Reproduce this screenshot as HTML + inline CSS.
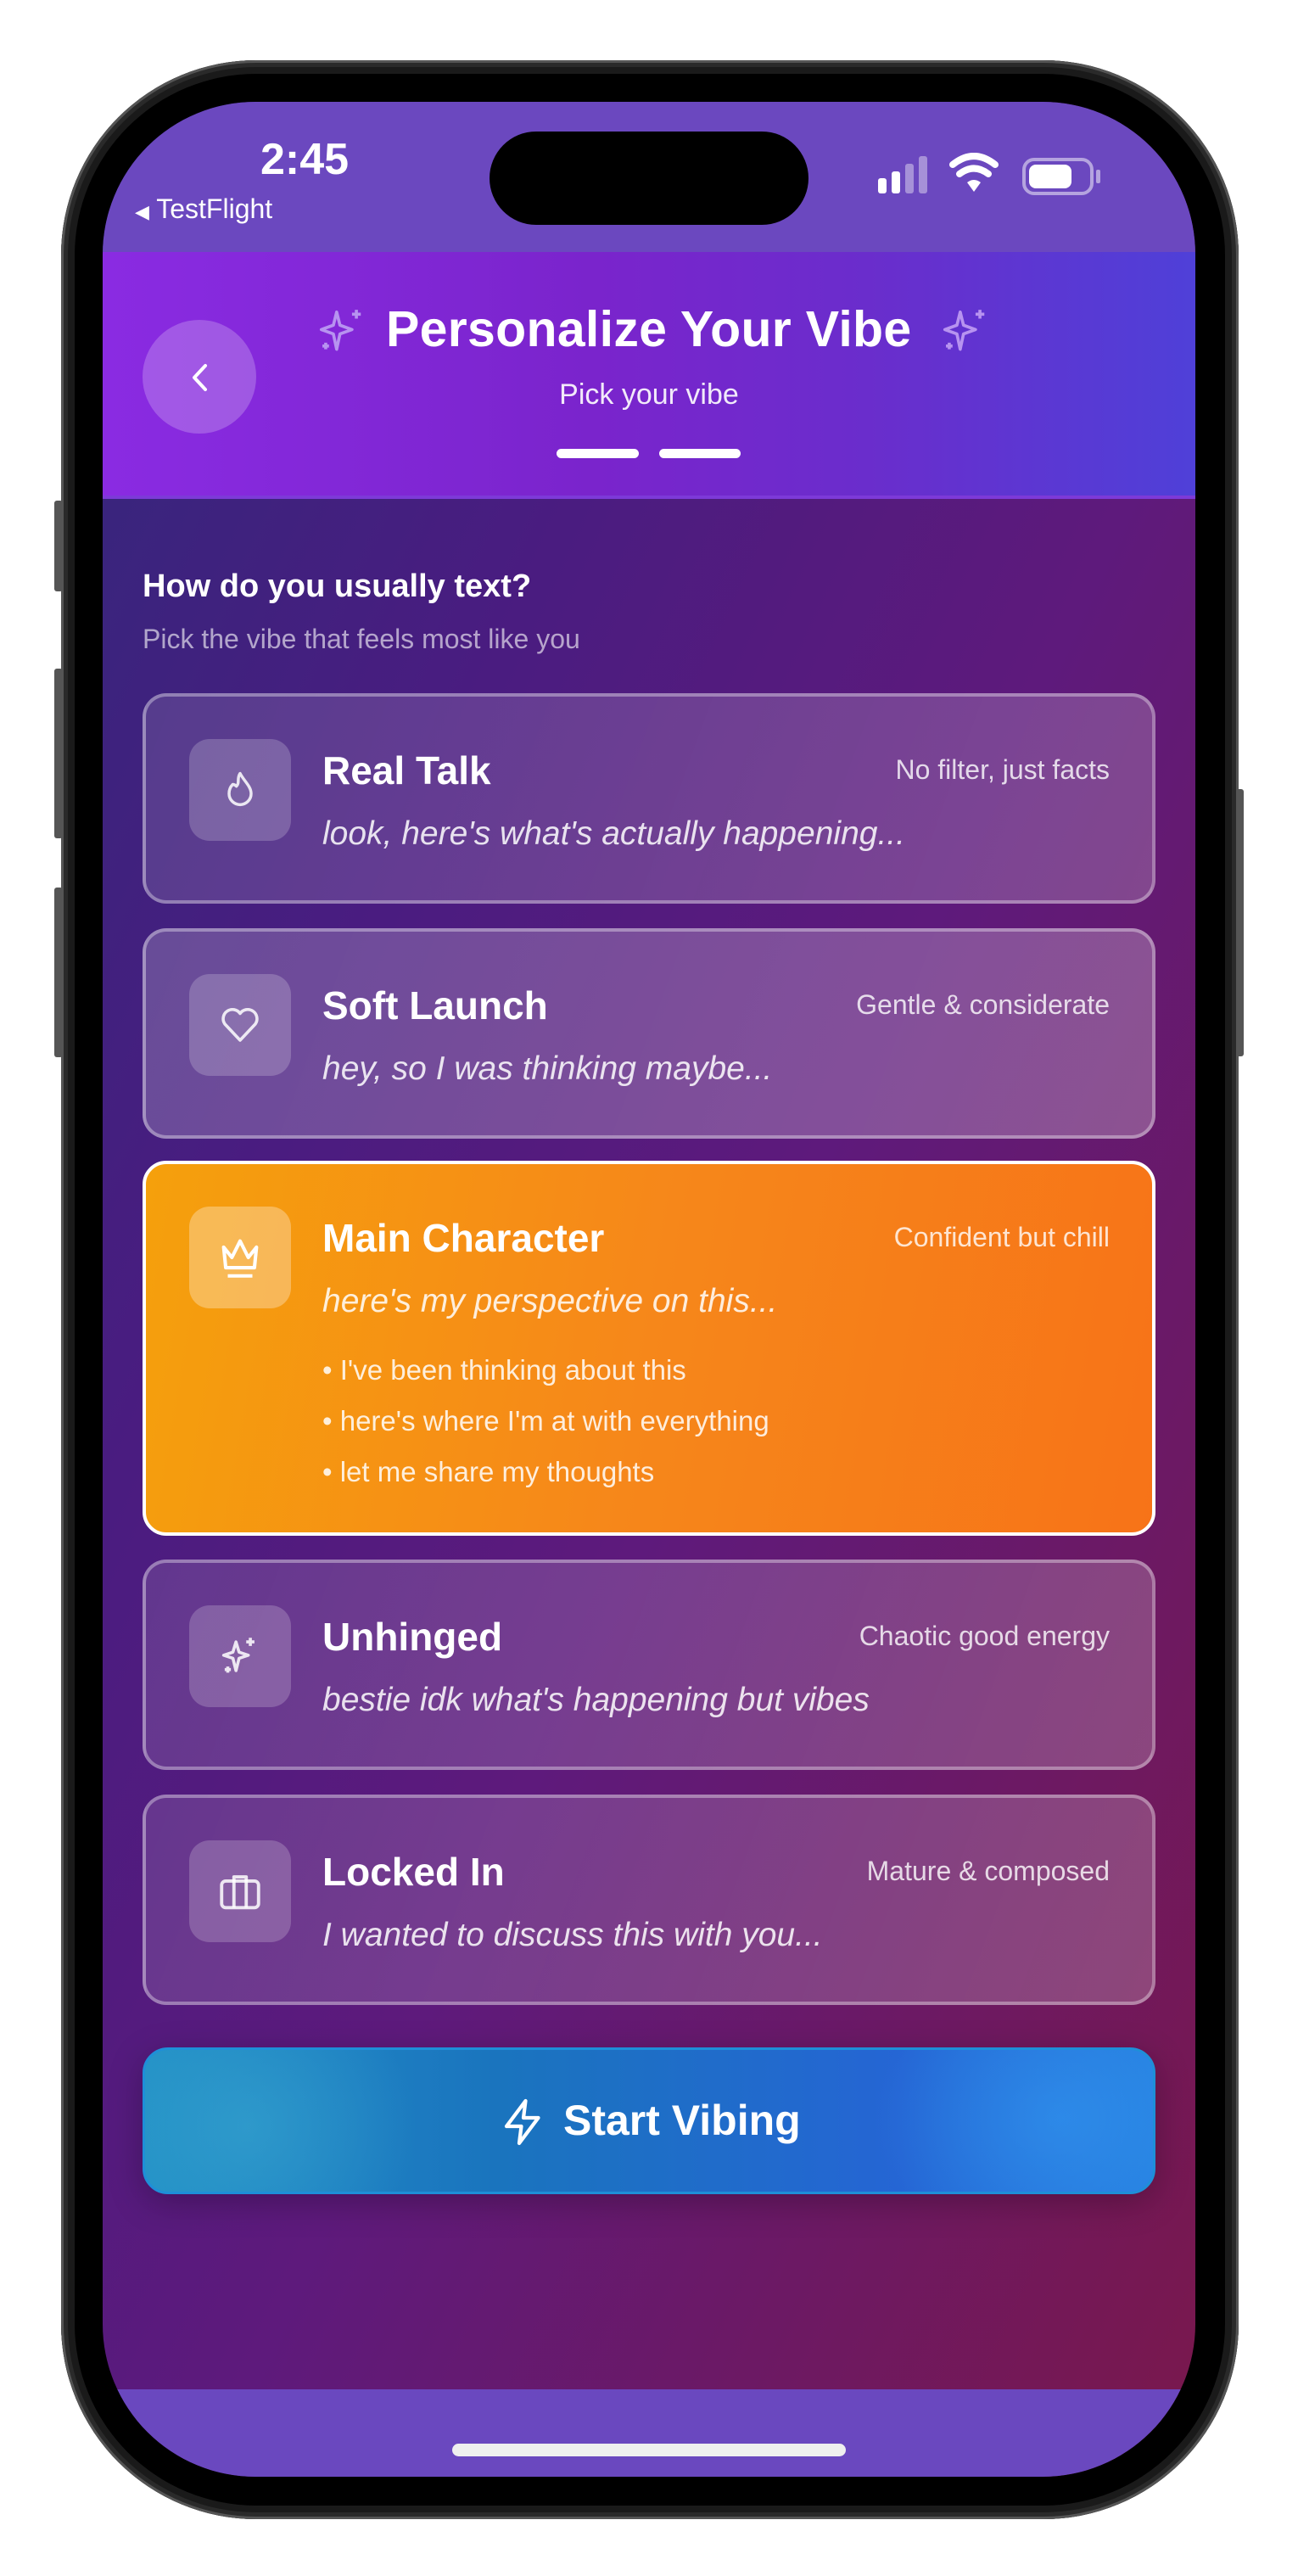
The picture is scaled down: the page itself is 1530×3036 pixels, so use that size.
<!DOCTYPE html>
<html><head><meta charset="utf-8"><style>
*{margin:0;padding:0;box-sizing:border-box}
body{width:1530px;height:3036px;background:#fff;position:relative;overflow:hidden;font-family:"Liberation Sans",sans-serif;color:#fff}
.abs{position:absolute}
.frame{left:72px;top:71px;width:1388px;height:2898px;border-radius:230px;background:#1a1a1a;box-shadow:inset 0 0 0 3px #555,inset 0 0 0 8px #2a2a2a}
.bezel{left:88px;top:87px;width:1356px;height:2866px;border-radius:214px;background:#000}
.screen{left:121px;top:120px;width:1288px;height:2799px;border-radius:180px;overflow:hidden;background:linear-gradient(115deg,#33287c 0%,#4a1c80 30%,#5e1a7c 55%,#7a184c 100%)}
.card{position:absolute;left:47px;width:1194px;border-radius:28px;border:4px solid rgba(255,255,255,.35);background:linear-gradient(110deg,rgba(255,255,255,.12),rgba(255,255,255,.2))}
.ibox{position:absolute;left:51px;top:50px;width:120px;height:120px;border-radius:24px;background:rgba(255,255,255,.2);display:flex;align-items:center;justify-content:center}
.t{position:absolute;left:208px;top:60px;font-size:46px;font-weight:bold}
.tag{position:absolute;right:50px;top:68px;font-size:32px;color:rgba(255,255,255,.8)}
.it{position:absolute;left:208px;top:140px;font-size:39px;font-style:italic;color:rgba(255,255,255,.85)}
.bl{position:absolute;left:208px;font-size:33px;color:rgba(255,255,255,.85)}
.btn{position:absolute;background:#555}
</style></head><body>
<div class="abs btn" style="left:64px;top:590px;width:10px;height:107px;border-radius:3px"></div>
<div class="abs btn" style="left:64px;top:788px;width:10px;height:200px;border-radius:3px"></div>
<div class="abs btn" style="left:64px;top:1046px;width:10px;height:200px;border-radius:3px"></div>
<div class="abs btn" style="left:1456px;top:930px;width:10px;height:315px;border-radius:3px"></div>
<div class="abs frame"></div>
<div class="abs bezel"></div>
<div class="abs screen">
  <div class="abs" style="left:0;top:0;width:1288px;height:177px;background:#6b48bf"></div>
  <div class="abs" style="left:186px;top:38px;font-size:52px;font-weight:bold">2:45</div>
  <div class="abs" style="left:38px;top:108px;font-size:32px"><span style="font-size:22px">◀</span> TestFlight</div>
  <div class="abs" style="left:456px;top:35px;width:376px;height:110px;border-radius:55px;background:#000"></div>
  <svg class="abs" style="left:910px;top:60px" width="200" height="60" viewBox="0 0 200 60">
    <rect x="4" y="30" width="10" height="18" rx="3" fill="#fff"/><rect x="20" y="22" width="10" height="26" rx="3" fill="#fff"/>
    <rect x="36" y="13" width="10" height="35" rx="3" fill="rgba(255,255,255,.4)"/><rect x="52" y="4" width="10" height="44" rx="3" fill="rgba(255,255,255,.4)"/>
    <path d="M92 14 Q117 -6 142 14" stroke="#fff" stroke-width="8" fill="none" stroke-linecap="round"/>
    <path d="M100 25 Q117 12 134 25" stroke="#fff" stroke-width="8" fill="none" stroke-linecap="round"/>
    <path d="M109 35 L117 46 L125 35 Q117 29 109 35Z" fill="#fff"/>
  </svg>
  <div class="abs" style="left:1084px;top:66px;width:84px;height:44px;border:4px solid rgba(255,255,255,.5);border-radius:14px;padding:4px"><div style="width:50px;height:28px;background:#fff;border-radius:8px"></div></div>
  <div class="abs" style="left:1171px;top:80px;width:5px;height:16px;background:rgba(255,255,255,.5);border-radius:2px"></div>
  <div class="abs" style="left:0;top:177px;width:1288px;height:291px;background:linear-gradient(90deg,#8a2be2 0%,#7a24cc 45%,#6a2dcc 70%,#4f40d8 100%);border-bottom:4px solid #7d3ad8"></div>
  <div class="abs" style="left:47px;top:257px;width:134px;height:134px;border-radius:67px;background:rgba(255,255,255,.22)"></div>
  <svg class="abs" style="left:100px;top:307px" width="30" height="36" viewBox="0 0 30 36"><path d="M21 4 L8 18 L21 32" stroke="#fff" stroke-width="4" fill="none" stroke-linecap="round" stroke-linejoin="round"/></svg>
  <svg class="abs" style="left:250px;top:240px" width="62" height="62" viewBox="0 0 24 24" fill="none" stroke="#b793f0" stroke-width="1.4" stroke-linejoin="round"><path d="M10 3 L11.5 9 L17 11 L11.5 13 L10 20 L8.5 13 L3 11 L8.5 9Z"/><path d="M19 2v4M17 4h4M5 17v3M3.5 18.5h3"/></svg>
  <div class="abs" style="left:334px;top:234px;font-size:59px;font-weight:bold;letter-spacing:.3px">Personalize Your Vibe</div>
  <svg class="abs" style="left:985px;top:240px" width="62" height="62" viewBox="0 0 24 24" fill="none" stroke="#b793f0" stroke-width="1.4" stroke-linejoin="round"><path d="M10 3 L11.5 9 L17 11 L11.5 13 L10 20 L8.5 13 L3 11 L8.5 9Z"/><path d="M19 2v4M17 4h4M5 17v3M3.5 18.5h3"/></svg>
  <div class="abs" style="left:0;width:1288px;text-align:center;top:326px;font-size:34px;color:rgba(255,255,255,.9)">Pick your vibe</div>
  <div class="abs" style="left:535px;top:409px;width:97px;height:11px;border-radius:6px;background:#fff"></div>
  <div class="abs" style="left:656px;top:409px;width:96px;height:11px;border-radius:6px;background:#fff"></div>

  <div class="abs" style="left:47px;top:550px;font-size:38px;font-weight:bold">How do you usually text?</div>
  <div class="abs" style="left:47px;top:615px;font-size:32px;color:rgba(255,255,255,.6)">Pick the vibe that feels most like you</div>

  <div class="card" style="top:697px;height:248px">
    <div class="ibox"><svg width="52" height="52" viewBox="0 0 24 24" fill="none" stroke="rgba(255,255,255,.85)" stroke-width="1.6" stroke-linecap="round" stroke-linejoin="round"><path d="M12 3c-2 3 0 5-2 7-1-1-2-1-2-1-2 2-2 4-2 5a6 6 0 0012 0c0-4-4-7-6-11z"/></svg></div>
    <div class="t">Real Talk</div><div class="tag">No filter, just facts</div>
    <div class="it">look, here's what's actually happening...</div>
  </div>
  <div class="card" style="top:974px;height:248px;background:linear-gradient(110deg,rgba(255,255,255,.2),rgba(255,255,255,.25))">
    <div class="ibox"><svg width="54" height="54" viewBox="0 0 24 24" fill="none" stroke="rgba(255,255,255,.85)" stroke-width="1.6" stroke-linejoin="round"><path d="M12 20 L4 11.5 A4.3 4.3 0 0112 6 A4.3 4.3 0 0120 11.5Z"/></svg></div>
    <div class="t">Soft Launch</div><div class="tag">Gentle &amp; considerate</div>
    <div class="it">hey, so I was thinking maybe...</div>
  </div>
  <div class="card" style="top:1248px;height:442px;background:linear-gradient(100deg,#f5a00c,#f6871a 50%,#f77318);border:4px solid #fff">
    <div class="ibox" style="background:rgba(255,255,255,.3)"><svg width="58" height="58" viewBox="0 0 24 24" fill="none" stroke="#fff" stroke-width="1.7" stroke-linejoin="round"><path d="M4 7 L8 12 L12 4 L16 12 L20 7 L19 17 H5Z"/><path d="M6 21h12"/></svg></div>
    <div class="t">Main Character</div><div class="tag">Confident but chill</div>
    <div class="it">here's my perspective on this...</div>
    <div class="bl" style="top:224px">• I've been thinking about this</div>
    <div class="bl" style="top:284px">• here's where I'm at with everything</div>
    <div class="bl" style="top:344px">• let me share my thoughts</div>
  </div>
  <div class="card" style="top:1718px;height:248px">
    <div class="ibox"><svg width="58" height="58" viewBox="0 0 24 24" fill="none" stroke="rgba(255,255,255,.85)" stroke-width="1.5" stroke-linejoin="round"><path d="M10 5 L11.5 10 L16 11.5 L11.5 13 L10 19 L8.5 13 L4 11.5 L8.5 10Z"/><path d="M17 3v4M15 5h4M6 17v3M4.5 18.5h3"/></svg></div>
    <div class="t">Unhinged</div><div class="tag">Chaotic good energy</div>
    <div class="it">bestie idk what's happening but vibes</div>
  </div>
  <div class="card" style="top:1995px;height:248px">
    <div class="ibox"><svg width="58" height="58" viewBox="0 0 24 24" fill="none" stroke="rgba(255,255,255,.85)" stroke-width="1.6" stroke-linejoin="round"><rect x="3" y="7" width="18" height="13" rx="2"/><path d="M9 7V5h6v2M9 7v13M15 7v13"/></svg></div>
    <div class="t">Locked In</div><div class="tag">Mature &amp; composed</div>
    <div class="it">I wanted to discuss this with you...</div>
  </div>

  <div class="abs" style="left:47px;top:2293px;width:1194px;height:173px;border-radius:30px;border:3px solid #1e8fd8;background:radial-gradient(ellipse 200px 180px at 120px 90px,rgba(60,170,210,.5),transparent),radial-gradient(ellipse 220px 180px at 1080px 80px,rgba(50,150,240,.6),transparent),linear-gradient(90deg,#2290c6,#1a74be 35%,#2565d4 75%,#2680e0);box-shadow:0 10px 40px rgba(0,0,0,.25)"></div>
  <svg class="abs" style="left:466px;top:2350px" width="60" height="62" viewBox="0 0 24 24" fill="none" stroke="#fff" stroke-width="1.7" stroke-linejoin="round"><path d="M13 2 L4 14 H11 L10 22 L19 10 H12Z"/></svg>
  <div class="abs" style="left:543px;top:2350px;font-size:50px;font-weight:bold">Start Vibing</div>

  <div class="abs" style="left:0;top:2696px;width:1288px;height:110px;background:#6a48bf"></div>
  <div class="abs" style="left:412px;top:2760px;width:464px;height:15px;border-radius:8px;background:#efefef"></div>
</div>
</body></html>
